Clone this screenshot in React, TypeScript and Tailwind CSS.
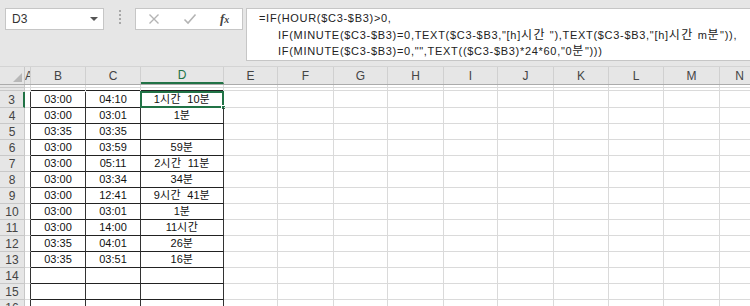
import React from 'react';

const cols = [
  { key: 'A', w: 'w-[6px]' },
  { key: 'B', w: 'w-[55px]' },
  { key: 'C', w: 'w-[55px]' },
  { key: 'D', w: 'w-[83px]' },
  { key: 'E', w: 'w-[54px]' },
  { key: 'F', w: 'w-[56px]' },
  { key: 'G', w: 'w-[54px]' },
  { key: 'H', w: 'w-[56px]' },
  { key: 'I', w: 'w-[54px]' },
  { key: 'J', w: 'w-[56px]' },
  { key: 'K', w: 'w-[55px]' },
  { key: 'L', w: 'w-[55px]' },
  { key: 'M', w: 'w-[56px]' },
  { key: 'N', w: 'w-[40px]' },
];

const rows: [number, string, string, string][] = [
  [3, '03:00', '04:10', '1시간 10분'],
  [4, '03:00', '03:01', '1분'],
  [5, '03:35', '03:35', ''],
  [6, '03:00', '03:59', '59분'],
  [7, '03:00', '05:11', '2시간 11분'],
  [8, '03:00', '03:34', '34분'],
  [9, '03:00', '12:41', '9시간 41분'],
  [10, '03:00', '03:01', '1분'],
  [11, '03:00', '14:00', '11시간'],
  [12, '03:35', '04:01', '26분'],
  [13, '03:35', '03:51', '16분'],
  [14, '', '', ''],
  [15, '', '', ''],
  [16, '', '', ''],
];

const font = { fontFamily: "'Liberation Sans', 'Noto Sans CJK KR', sans-serif" };

// korean runs get a bit more room, like the old gulim rendering
function Ko({ text, wide }: { text: string; wide?: boolean }) {
  const parts = text.split(/([가-힣]+)/);
  return (
    <>
      {parts.map((p, i) =>
        /[가-힣]/.test(p) ? (
          <span key={i} className={wide ? 'text-[12px] tracking-[1.5px]' : 'tracking-[0.5px]'}>
            {p}
          </span>
        ) : (
          <React.Fragment key={i}>{p}</React.Fragment>
        )
      )}
    </>
  );
}

function FormulaBar() {
  return (
    <div className="h-[67px] bg-[#e6e6e6] border-b border-[#d4d4d4] flex items-start pt-[8px] pl-[5px]">
      <div className="w-[99px] h-[22px] bg-white border border-[#c6c6c6] flex items-center justify-between pl-[6px] pr-[5px] text-[12px] text-[#333]">
        <span>D3</span>
        <span className="w-0 h-0 border-l-[4px] border-r-[4px] border-t-[4px] border-l-transparent border-r-transparent border-t-[#555]" />
      </div>
      <div className="ml-[15px] mt-[2px] flex flex-col gap-[2px]">
        <span className="w-[2px] h-[2px] bg-[#a8a8a8]" />
        <span className="w-[2px] h-[2px] bg-[#a8a8a8]" />
        <span className="w-[2px] h-[2px] bg-[#a8a8a8]" />
        <span className="w-[2px] h-[2px] bg-[#a8a8a8]" />
      </div>
      <div className="ml-[14px] w-[108px] h-[22px] bg-white border border-[#c6c6c6] flex items-center">
        <svg className="ml-[12px]" width="12" height="12" viewBox="0 0 12 12">
          <path d="M1.5 1.5 L10.5 10.5 M10.5 1.5 L1.5 10.5" stroke="#b4b4b4" strokeWidth="1.4" />
        </svg>
        <svg className="ml-[23px]" width="14" height="12" viewBox="0 0 14 12">
          <path d="M1.5 6.5 L5 10 L12.5 1.5" stroke="#b4b4b4" strokeWidth="1.6" fill="none" />
        </svg>
        <span className="ml-[23px] italic text-[13px] text-[#444] font-bold" style={{ fontFamily: "'Liberation Serif', serif" }}>
          f<span className="text-[10px]">x</span>
        </span>
      </div>
      <div className="ml-[3px] flex-1 h-[53px] bg-white border border-r-0 border-[#c6c6c6] pl-[12px] pt-[1px] text-[11px] leading-[16.5px] tracking-[0.7px] text-[#222] whitespace-nowrap" style={font}>
        <div>=IF(HOUR($C3-$B3)&gt;0,</div>
        <div className="pl-[19px]">
          <Ko wide text={'IF(MINUTE($C3-$B3)=0,TEXT($C3-$B3,"[h]시간 "),TEXT($C3-$B3,"[h]시간 m분")),'} />
        </div>
        <div className="pl-[19px]">
          <Ko wide text={'IF(MINUTE($C3-$B3)=0,"",TEXT(($C3-$B3)*24*60,"0분")))'} />
        </div>
      </div>
    </div>
  );
}

function HeaderRow() {
  return (
    <div className="flex h-[18px] bg-[#e6e6e6] border-b border-[#ababab] text-[12px] text-[#444]">
      <div className="w-[25px] shrink-0 relative border-r border-[#c8c8c8]">
        <span className="absolute right-[2px] bottom-[2px] w-0 h-0" style={{ borderBottom: '9px solid #b8b8b8', borderLeft: '9px solid transparent' }} />
      </div>
      {cols.map((c) => (
        <div
          key={c.key}
          className={`${c.w} shrink-0 flex items-center justify-center overflow-hidden border-r border-[#d0d0d0] ${c.key === 'D' ? 'border-b-2 border-b-[#217346] text-[#217346]' : ''}`}
        >
          {c.key === 'A' ? <span className="pl-[3px]">A</span> : c.key}
        </div>
      ))}
    </div>
  );
}

function HiddenRows() {
  return (
    <div className="flex h-[7px] bg-white">
      <div className="w-[25px] shrink-0 bg-[#e6e6e6] border-r border-[#c8c8c8] flex flex-col">
        <div className="h-[3px] border-b border-[#c8c8c8]" />
        <div className="h-[3px] border-b border-[#c8c8c8]" />
      </div>
      {cols.map((c) => {
        const table = c.key === 'B' || c.key === 'C' || c.key === 'D';
        return (
          <div key={c.key} className={`${c.w} shrink-0 flex flex-col border-r border-[#dadada]`}>
            <div className="h-[3px] border-b border-[#dadada]" />
            <div className={`h-[3px] border-b ${table ? 'border-[#222]' : 'border-[#dadada]'}`} />
          </div>
        );
      })}
    </div>
  );
}

function DataRow({ r }: { r: [number, string, string, string] }) {
  const [n, b, c, d] = r;
  const vals: Record<string, string> = { B: b, C: c, D: d };
  return (
    <div className="flex h-[16px] bg-white text-[11px] text-[#111]" style={font}>
      <div className={`w-[25px] shrink-0 bg-[#e6e6e6] flex items-center justify-center text-[12px] text-[#444] border-b border-[#c8c8c8] ${n === 3 ? 'border-r-2 border-r-[#217346]' : 'border-r border-[#c8c8c8]'}`}>
        {n}
      </div>
      {cols.map((col) => {
        const table = col.key === 'B' || col.key === 'C' || col.key === 'D';
        const edge = col.key === 'A';
        return (
          <div
            key={col.key}
            className={`${col.w} shrink-0 relative flex items-center justify-center whitespace-nowrap ${
              table ? 'border-r border-b border-r-[#333] border-b-[#222]' : edge ? 'border-r border-b border-r-[#333] border-b-[#dadada]' : 'border-r border-b border-[#dadada]'
            }`}
          >
            {col.key === 'D' ? <Ko text={vals.D.replace(' ', '\u00a0\u00a0')} /> : vals[col.key] ?? ''}
            {n === 3 && col.key === 'D' && (
              <>
                <span className="absolute -left-[1px] -top-[1px] -right-[1px] -bottom-[1px] border-2 border-[#217346]" />
                <span className="absolute -right-[3px] -bottom-[3px] w-[5px] h-[5px] bg-[#217346] border border-white" />
              </>
            )}
          </div>
        );
      })}
    </div>
  );
}

export default function App() {
  return (
    <div className="w-[750px] h-[306px] overflow-hidden bg-white" style={font}>
      <FormulaBar />
      <HeaderRow />
      <HiddenRows />
      {rows.map((r) => (
        <DataRow key={r[0]} r={r} />
      ))}
    </div>
  );
}
